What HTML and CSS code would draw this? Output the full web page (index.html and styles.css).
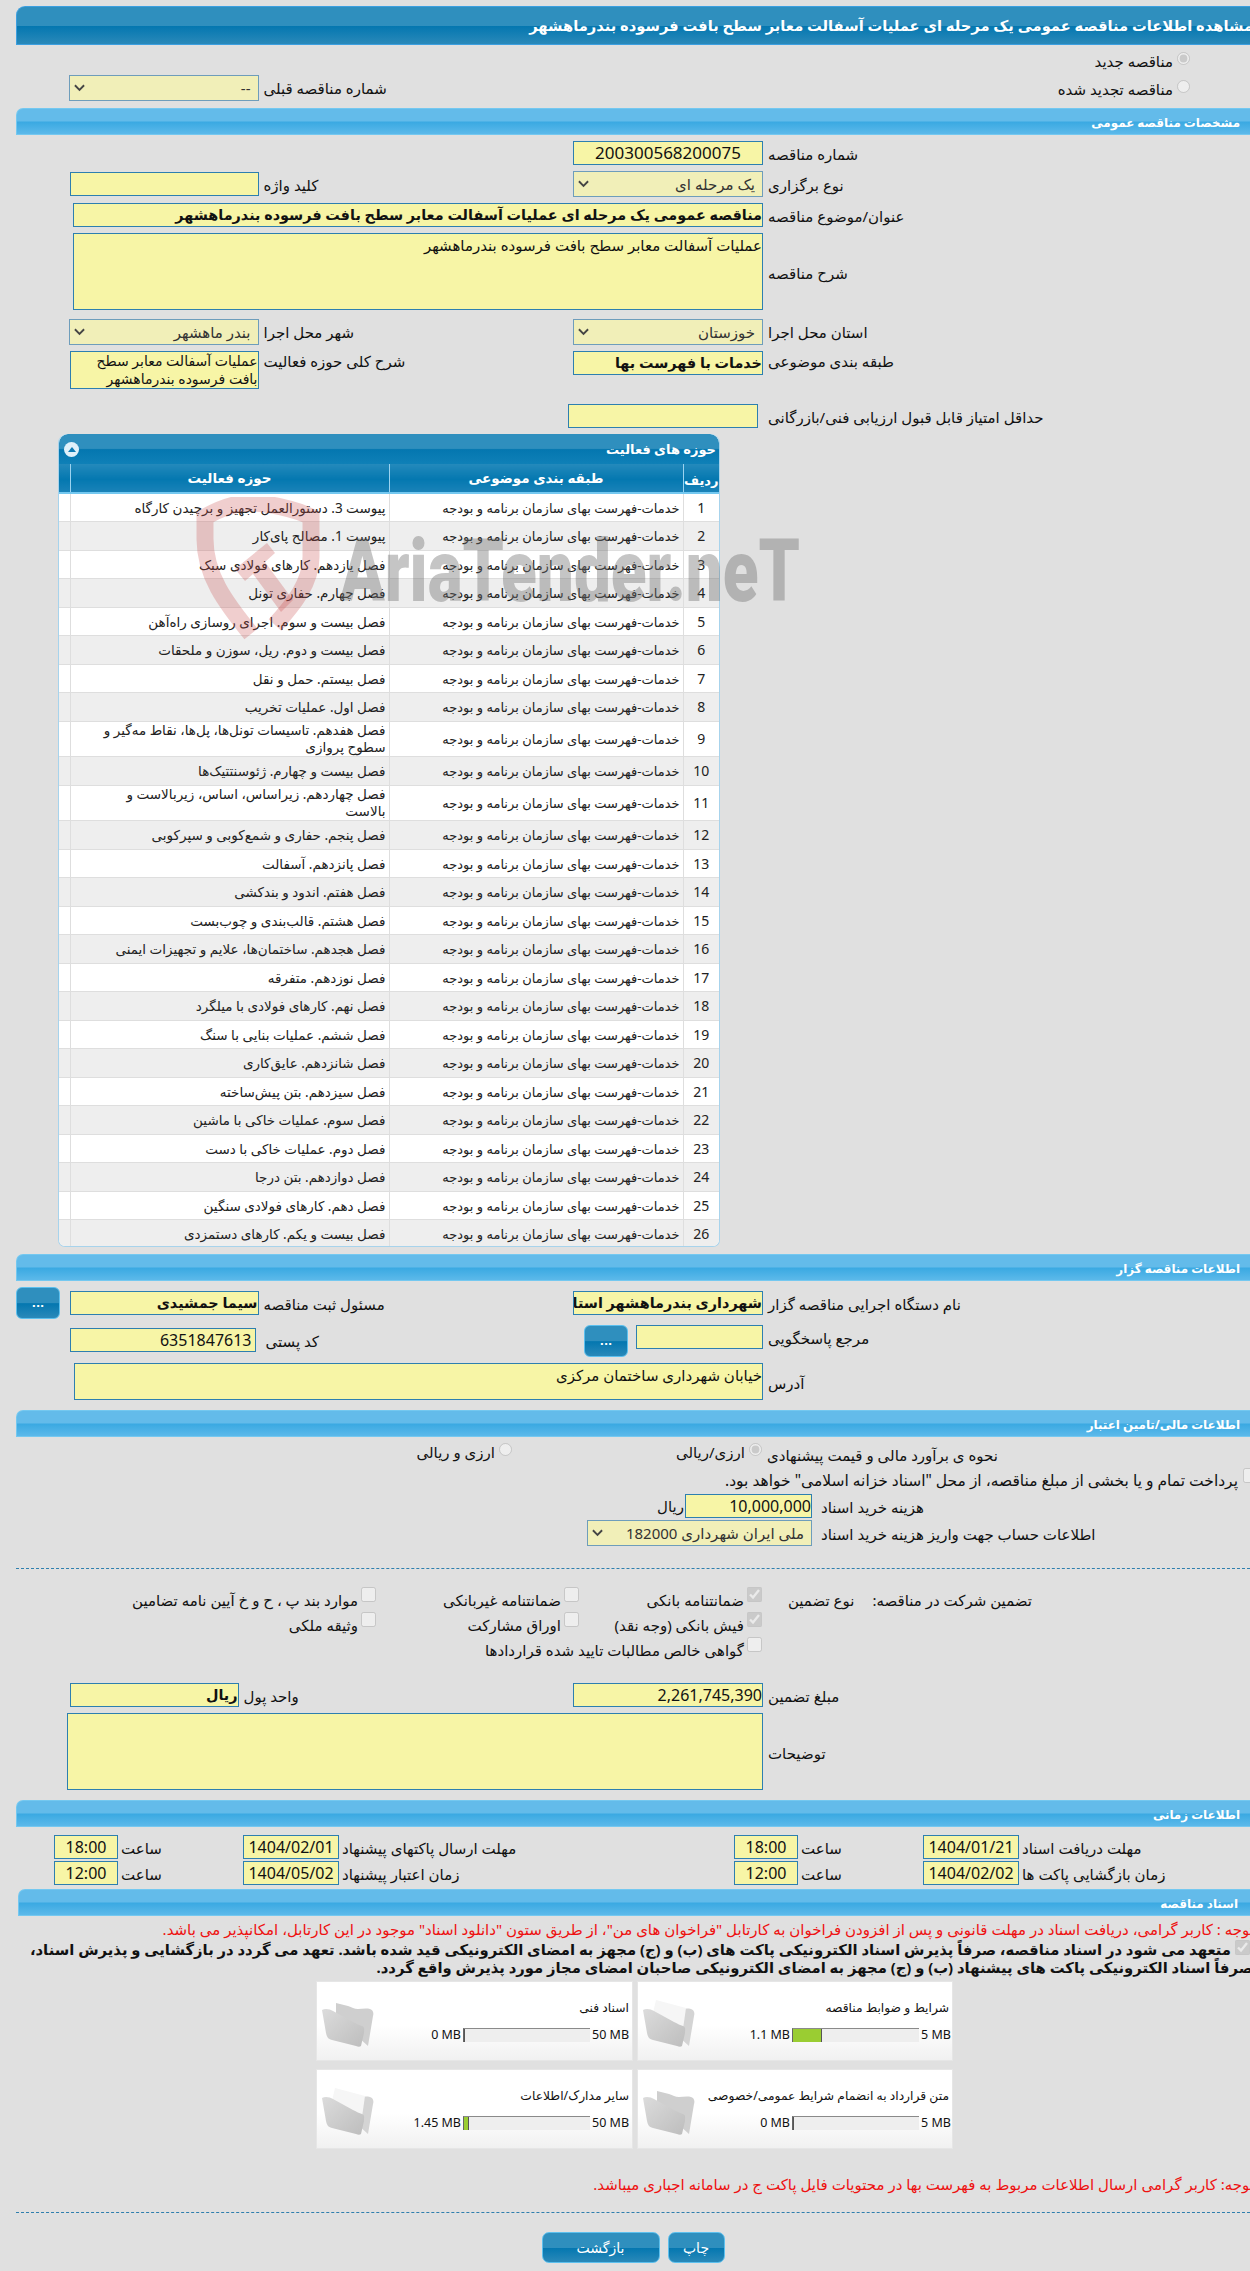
FILE: index.html
```html
<!DOCTYPE html>
<html lang="fa">
<head>
<meta charset="utf-8">
<title>مشاهده اطلاعات مناقصه</title>
<link rel="stylesheet" href="styles.css">
</head>
<body>
<div class="page">
  <h1 class="title"><span>مشاهده اطلاعات مناقصه عمومی یک مرحله ای عملیات آسفالت معابر سطح بافت فرسوده بندرماهشهر</span></h1>

  <div class="radio-row r-first"><label class="opt"><input type="radio" disabled checked><span>مناقصه جدید</span></label></div>
  <div class="row r-b">
    <div class="sel w190 c1"><span>--</span><svg class="chev" viewBox="0 0 12 8"><path d="M1 1l5 5 5-5" fill="none" stroke="#444" stroke-width="2"/></svg></div>
    <div class="l">شماره مناقصه قبلی</div>
    <label class="opt renew"><input type="radio" disabled><span>مناقصه تجدید شده</span></label>
  </div>

  <h2 class="sec m7">مشخصات مناقصه عمومی</h2>

  <div class="row m6">
    <div></div><div></div>
    <div class="inp w190 num big center">200300568200075</div>
    <div class="l">شماره مناقصه</div>
  </div>
  <div class="row m6 mid">
    <div class="inp w189 c1"></div>
    <div class="l">کلید واژه</div>
    <div class="sel w190 h27"><span>یک مرحله ای</span><svg class="chev" viewBox="0 0 12 8"><path d="M1 1l5 5 5-5" fill="none" stroke="#444" stroke-width="2"/></svg></div>
    <div class="l">نوع برگزاری</div>
  </div>
  <div class="row m6">
    <div class="inp wide690 strong span3">مناقصه عمومی یک مرحله ای عملیات آسفالت معابر سطح بافت فرسوده بندرماهشهر</div>
    <div class="l">عنوان/موضوع مناقصه</div>
  </div>
  <div class="row m6 mid">
    <div class="area wide690 h77 span3">عملیات آسفالت معابر سطح بافت فرسوده بندرماهشهر</div>
    <div class="l">شرح مناقصه</div>
  </div>
  <div class="row m9">
    <div class="sel w190 h27 c1"><span>بندر ماهشهر</span><svg class="chev" viewBox="0 0 12 8"><path d="M1 1l5 5 5-5" fill="none" stroke="#444" stroke-width="2"/></svg></div>
    <div class="l">شهر محل اجرا</div>
    <div class="sel w190 h27"><span>خوزستان</span><svg class="chev" viewBox="0 0 12 8"><path d="M1 1l5 5 5-5" fill="none" stroke="#444" stroke-width="2"/></svg></div>
    <div class="l">استان محل اجرا</div>
  </div>
  <div class="row m6">
    <div class="area w189 h38 c1 two">عملیات آسفالت معابر سطح بافت فرسوده بندرماهشهر</div>
    <div class="l lup">شرح کلی حوزه فعالیت</div>
    <div class="inp w190 strong">خدمات با فهرست بها</div>
    <div class="l lup">طبقه بندی موضوعی</div>
  </div>
  <div class="row m15">
    <div></div><div></div>
    <div class="inp w190 shift5"></div>
    <div class="l">حداقل امتیاز قابل قبول ارزیابی فنی/بازرگانی</div>
  </div>

  <section class="panel">
    <div class="panel-head">
      <span class="toggle"><svg viewBox="0 0 10 6"><path d="M5 0l5 6H0z" fill="#0f7bb3"/></svg></span>
      <span class="panel-title">حوزه های فعالیت</span>
    </div>
    <table class="grid" dir="rtl">
      <thead><tr><th class="cn">ردیف</th><th class="cc">طبقه بندی موضوعی</th><th class="ca">حوزه فعالیت</th><th class="cs"></th></tr></thead>
      <tbody>
        <tr><td class="cn">1</td><td>خدمات-فهرست بهای سازمان برنامه و بودجه</td><td>پیوست 3. دستورالعمل تجهیز و برچیدن کارگاه</td><td></td></tr>
        <tr><td class="cn">2</td><td>خدمات-فهرست بهای سازمان برنامه و بودجه</td><td>پیوست 1. مصالح پای‌کار</td><td></td></tr>
        <tr><td class="cn">3</td><td>خدمات-فهرست بهای سازمان برنامه و بودجه</td><td>فصل یازدهم. کارهای فولادی سبک</td><td></td></tr>
        <tr><td class="cn">4</td><td>خدمات-فهرست بهای سازمان برنامه و بودجه</td><td>فصل چهارم. حفاری تونل</td><td></td></tr>
        <tr><td class="cn">5</td><td>خدمات-فهرست بهای سازمان برنامه و بودجه</td><td>فصل بیست و سوم. اجرای روسازی راه‌آهن</td><td></td></tr>
        <tr><td class="cn">6</td><td>خدمات-فهرست بهای سازمان برنامه و بودجه</td><td>فصل بیست و دوم. ریل، سوزن و ملحقات</td><td></td></tr>
        <tr><td class="cn">7</td><td>خدمات-فهرست بهای سازمان برنامه و بودجه</td><td>فصل بیستم. حمل و نقل</td><td></td></tr>
        <tr><td class="cn">8</td><td>خدمات-فهرست بهای سازمان برنامه و بودجه</td><td>فصل اول. عملیات تخریب</td><td></td></tr>
        <tr class="tall"><td class="cn">9</td><td>خدمات-فهرست بهای سازمان برنامه و بودجه</td><td>فصل هفدهم. تاسیسات تونل‌ها، پل‌ها، نقاط مه‌گیر و سطوح پروازی</td><td></td></tr>
        <tr><td class="cn">10</td><td>خدمات-فهرست بهای سازمان برنامه و بودجه</td><td>فصل بیست و چهارم. ژئوسنتتیک‌ها</td><td></td></tr>
        <tr class="tall"><td class="cn">11</td><td>خدمات-فهرست بهای سازمان برنامه و بودجه</td><td>فصل چهاردهم. زیراساس، اساس، زیربالاست  و<br>بالاست</td><td></td></tr>
        <tr><td class="cn">12</td><td>خدمات-فهرست بهای سازمان برنامه و بودجه</td><td>فصل پنجم. حفاری و شمع‌کوبی و سپرکوبی</td><td></td></tr>
        <tr><td class="cn">13</td><td>خدمات-فهرست بهای سازمان برنامه و بودجه</td><td>فصل پانزدهم. آسفالت</td><td></td></tr>
        <tr><td class="cn">14</td><td>خدمات-فهرست بهای سازمان برنامه و بودجه</td><td>فصل هفتم. اندود و بندکشی</td><td></td></tr>
        <tr><td class="cn">15</td><td>خدمات-فهرست بهای سازمان برنامه و بودجه</td><td>فصل هشتم. قالب‌بندی و چوب‌بست</td><td></td></tr>
        <tr><td class="cn">16</td><td>خدمات-فهرست بهای سازمان برنامه و بودجه</td><td>فصل هجدهم. ساختمان‌ها، علایم و تجهیزات ایمنی</td><td></td></tr>
        <tr><td class="cn">17</td><td>خدمات-فهرست بهای سازمان برنامه و بودجه</td><td>فصل نوزدهم. متفرقه</td><td></td></tr>
        <tr><td class="cn">18</td><td>خدمات-فهرست بهای سازمان برنامه و بودجه</td><td>فصل نهم. کارهای فولادی با میلگرد</td><td></td></tr>
        <tr><td class="cn">19</td><td>خدمات-فهرست بهای سازمان برنامه و بودجه</td><td>فصل ششم. عملیات بنایی با سنگ</td><td></td></tr>
        <tr><td class="cn">20</td><td>خدمات-فهرست بهای سازمان برنامه و بودجه</td><td>فصل شانزدهم. عایق‌کاری</td><td></td></tr>
        <tr><td class="cn">21</td><td>خدمات-فهرست بهای سازمان برنامه و بودجه</td><td>فصل سیزدهم. بتن پیش‌ساخته</td><td></td></tr>
        <tr><td class="cn">22</td><td>خدمات-فهرست بهای سازمان برنامه و بودجه</td><td>فصل سوم. عملیات خاکی با ماشین</td><td></td></tr>
        <tr><td class="cn">23</td><td>خدمات-فهرست بهای سازمان برنامه و بودجه</td><td>فصل دوم. عملیات خاکی با دست</td><td></td></tr>
        <tr><td class="cn">24</td><td>خدمات-فهرست بهای سازمان برنامه و بودجه</td><td>فصل دوازدهم. بتن درجا</td><td></td></tr>
        <tr><td class="cn">25</td><td>خدمات-فهرست بهای سازمان برنامه و بودجه</td><td>فصل دهم. کارهای فولادی سنگین</td><td></td></tr>
        <tr><td class="cn">26</td><td>خدمات-فهرست بهای سازمان برنامه و بودجه</td><td>فصل بیست و یکم. کارهای دستمزدی</td><td></td></tr>
      </tbody>
    </table>
  </section>

  <h2 class="sec m7">اطلاعات مناقصه گزار</h2>

  <div class="row m6 h32 mid">
    <div class="with-btn c1"><button class="btn-dots" type="button">...</button><div class="inp w189 strong">سیما جمشیدی</div></div>
    <div class="l">مسئول ثبت مناقصه</div>
    <div class="inp w190 strong">شهرداری بندرماهشهر استان خوزستان</div>
    <div class="l">نام دستگاه اجرایی مناقصه گزار</div>
  </div>
  <div class="row m6 h32">
    <div class="inp w186 num c1 ind3 down3 rm3">6351847613</div>
    <div class="l lp7 down3">کد پستی</div>
    <div class="with-btn2"><button class="btn-dots" type="button">...</button><div class="inp w127"></div></div>
    <div class="l">مرجع پاسخگویی</div>
  </div>
  <div class="row m6 mid">
    <div class="area wide689 h37 span3">خیابان شهرداری ساختمان مرکزی</div>
    <div class="l">آدرس</div>
  </div>

  <h2 class="sec m10">اطلاعات مالی/تامین اعتبار</h2>

  <div class="cur-row">
    <label class="opt c-end"><input type="radio" disabled><span>ارزی و ریالی</span></label>
    <label class="opt c-end"><input type="radio" disabled checked><span>ارزی/ریالی</span></label>
    <div class="l nop">نحوه ی برآورد مالی و قیمت پیشنهادی</div>
  </div>
  <div class="treasury"><input type="checkbox" disabled><span>پرداخت تمام و یا بخشی از مبلغ مناقصه، از محل "اسناد خزانه اسلامی" خواهد بود.</span></div>
  <div class="row-b m5">
    <div class="cost"><span class="unit">ریال</span><div class="inp w127 num">10,000,000</div></div>
    <div class="l lp9">هزینه خرید اسناد</div>
  </div>
  <div class="row-b m2">
    <div class="sel w225 h27 endself"><span>ملی ایران شهرداری 182000</span><svg class="chev" viewBox="0 0 12 8"><path d="M1 1l5 5 5-5" fill="none" stroke="#444" stroke-width="2"/></svg></div>
    <div class="l lp9">اطلاعات حساب جهت واریز هزینه خرید اسناد</div>
  </div>

  <hr class="dots m22">

  <div class="g-row m18">
    <label class="ck"><input type="checkbox" disabled><span>موارد بند پ ، ح و خ آیین نامه تضامین</span></label>
    <label class="ck"><input type="checkbox" disabled><span>ضمانتنامه غیربانکی</span></label>
    <label class="ck"><input type="checkbox" disabled checked><span>ضمانتنامه بانکی</span></label>
    <div class="g-title"><span>نوع تضمین</span><span>تضمین شرکت در مناقصه:</span></div>
  </div>
  <div class="g-row m3">
    <label class="ck"><input type="checkbox" disabled><span>وثیقه ملکی</span></label>
    <label class="ck"><input type="checkbox" disabled><span>اوراق مشارکت</span></label>
    <label class="ck"><input type="checkbox" disabled checked><span>فیش بانکی (وجه نقد)</span></label>
  </div>
  <div class="g-row m3">
    <label class="ck ck-span"><input type="checkbox" disabled><span>گواهی خالص مطالبات تایید شده قراردادها</span></label>
  </div>

  <div class="row m24">
    <div class="inp w169 strong c1 rm20">ریال</div>
    <div class="l lshift">واحد پول</div>
    <div class="inp w190 num">2,261,745,390</div>
    <div class="l">مبلغ تضمین</div>
  </div>
  <div class="row m6 mid">
    <div class="area wide696 h77 span3"></div>
    <div class="l">توضیحات</div>
  </div>

  <h2 class="sec m10">اطلاعات زمانی</h2>

  <div class="dates m8">
    <div class="inp num center">18:00</div><div class="l lp3">ساعت</div>
    <div class="inp num center">1404/02/01</div><div class="l lp3">مهلت ارسال پاکتهای پیشنهاد</div>
    <div class="inp num center">18:00</div><div class="l lp3">ساعت</div>
    <div class="inp num center">1404/01/21</div><div class="l lp3">مهلت دریافت اسناد</div>
  </div>
  <div class="dates m2">
    <div class="inp num center">12:00</div><div class="l lp3">ساعت</div>
    <div class="inp num center">1404/05/02</div><div class="l lp3">زمان اعتبار پیشنهاد</div>
    <div class="inp num center">12:00</div><div class="l lp3">ساعت</div>
    <div class="inp num center">1404/02/02</div><div class="l lp3">زمان بازگشایی پاکت ها</div>
  </div>

  <h2 class="sec sec-docs m4">اسناد مناقصه</h2>

  <p class="red m3">توجه : کاربر گرامی، دریافت اسناد در مهلت قانونی و پس از افزودن فراخوان به کارتابل "فراخوان های من"، از طریق ستون "دانلود اسناد" موجود در این کارتابل، امکانپذیر می باشد.</p>
  <div class="pledge"><input type="checkbox" disabled checked><span>متعهد می شود در اسناد مناقصه، صرفاً پذیرش اسناد الکترونیکی پاکت های (ب) و (ج) مجهز به امضای الکترونیکی قید شده باشد. تعهد می گردد در بازگشایی و پذیرش اسناد،</span></div>
  <p class="pledge2">صرفاً اسناد الکترونیکی پاکت های پیشنهاد (ب) و (ج) مجهز به امضای الکترونیکی صاحبان امضای مجاز مورد پذیرش واقع گردد.</p>

  <div class="cards">
    <article class="card">
      <svg class="folder" viewBox="0 0 56 50"><use href="#f-empty"/></svg>
      <div class="card-body"><div class="card-title">اسناد فنی</div>
        <div class="meter"><span>0 MB</span><div class="bar"><i class="fill" style="width:0"></i></div><span class="max50">50 MB</span></div></div>
    </article>
    <article class="card">
      <svg class="folder" viewBox="0 0 56 50"><use href="#f-full"/></svg>
      <div class="card-body"><div class="card-title">شرایط و ضوابط مناقصه</div>
        <div class="meter"><span>1.1 MB</span><div class="bar"><i class="fill" style="width:23%"></i></div><span class="max5">5 MB</span></div></div>
    </article>
    <article class="card">
      <svg class="folder" viewBox="0 0 56 50"><use href="#f-full"/></svg>
      <div class="card-body"><div class="card-title">سایر مدارک/اطلاعات</div>
        <div class="meter"><span>1.45 MB</span><div class="bar"><i class="fill" style="width:4%"></i></div><span class="max50">50 MB</span></div></div>
    </article>
    <article class="card">
      <svg class="folder" viewBox="0 0 56 50"><use href="#f-empty"/></svg>
      <div class="card-body"><div class="card-title">متن قرارداد به انضمام شرایط عمومی/خصوصی</div>
        <div class="meter"><span>0 MB</span><div class="bar"><i class="fill" style="width:0"></i></div><span class="max5">5 MB</span></div></div>
    </article>
  </div>

  <p class="red note">توجه: کاربر گرامی ارسال اطلاعات مربوط به فهرست بها در محتویات فایل پاکت ج در سامانه اجباری میباشد.</p>
  <hr class="dots m18">
  <div class="actions">
    <button class="btn b-back" type="button">بازگشت</button>
    <button class="btn b-print" type="button">چاپ</button>
  </div>

  <svg class="watermark" viewBox="0 0 610 145" aria-hidden="true">
    <path d="M56 137C30 105 10 78 10 42V20C24 12 38 6 55 6s46 6 61 14v40c0 26-18 48-36 68" fill="none" stroke="#c9504f" stroke-opacity=".28" stroke-width="17"/>
    <path d="M40 72L72 46l8 10-10 9 28 38-12 12-28-38-8 7z" fill="#c9504f" fill-opacity=".28"/>
    <text x="145" y="104" class="wm-text" textLength="460" lengthAdjust="spacingAndGlyphs">AriaTender.neT</text>
  </svg>

  <svg class="defs" aria-hidden="true">
    <defs>
      <linearGradient id="fg" x1="0" y1="0" x2="1" y2="1"><stop offset="0" stop-color="#dcdcdc"/><stop offset="1" stop-color="#bdbdbd"/></linearGradient>
      <symbol id="f-empty" viewBox="0 0 56 50">
        <path d="M16 6l12 3c4 1 6 3 10 3 4 0 8-1 12 0 3 1 4 4 3 7l-5 30L16 20z" fill="#cfcfcf"/>
        <path d="M2 13c3-2 8-1 11 1l20 11c4 2 6 3 9 4 3 1 2 4 2 7l-3 13c-1 1-3 1-5 0L12 43C8 42 7 40 6 36z" fill="url(#fg)"/>
      </symbol>
      <symbol id="f-full" viewBox="0 0 56 50">
        <path d="M16 6l12 3c4 1 6 3 10 3 4 0 8-1 12 0 3 1 4 4 3 7l-5 30L16 20z" fill="#d4d4d4"/>
        <path d="M15 3l30 8-4 28L12 16z" fill="#f6f6f6"/>
        <path d="M2 13c3-2 8-1 11 1l20 11c4 2 6 3 9 4 3 1 2 4 2 7l-3 13c-1 1-3 1-5 0L12 43C8 42 7 40 6 36z" fill="url(#fg)"/>
      </symbol>
    </defs>
  </svg>
</div>
</body>
</html>
```
FILE: styles.css
```css
* { box-sizing: border-box; }
html, body { margin: 0; padding: 0; width: 1250px; height: 2271px; overflow: hidden; background: #e0e0e0; }
body { font-family: "Noto Sans", "DejaVu Sans", sans-serif; font-size: 13px; color: #111; }
.page { position: relative; width: 1250px; height: 2271px; padding: 6px 0 0 16px; overflow: hidden; }

.title { margin: 0; height: 39px; direction: rtl; white-space: nowrap; overflow: hidden; color: #fff; font-size: 14.7px; font-weight: bold; line-height: 37px;
  border: 1px solid #3c9fe0; border-right: 0; border-radius: 9px 0 0 0; padding-right: 0;
  background: linear-gradient(#2f8fbe 0, #2f8fbe 50%, #0477b0 52%, #2a89b9 100%); }
.title span { display: inline-block; margin-right: -3px; }

.sec { margin: 0; height: 27px; direction: rtl; padding-right: 10px; color: #fff; font-size: 11.9px; font-weight: bold; line-height: 26px;
  border: 1px solid #74c8f0; border-right: 0; border-radius: 7px 0 0 0;
  background: linear-gradient(#63bbea 0, #63bbea 48%, #3aa9e2 52%, #5cb9ea 100%); }
.sec-docs { margin-left: 2px; padding-right: 12px; }

.m2 { margin-top: 2px; } .m3 { margin-top: 3px; } .m4 { margin-top: 4px; } .m5 { margin-top: 5px; }
.m6 { margin-top: 6px; } .m7 { margin-top: 7px; } .m8 { margin-top: 8px; } .m9 { margin-top: 9px; }
.m10 { margin-top: 10px; } .m15 { margin-top: 15px; } .m18 { margin-top: 18px; }
.m22 { margin-top: 22px; } .m24 { margin-top: 24px; }

.row { display: grid; grid-template-columns: 242.5px 314.5px 190px 1fr; align-items: start; }
.row.mid { align-items: center; }
.h32 { min-height: 32px; }
.c1 { justify-self: end; }
.span3 { grid-column: 1 / 4; justify-self: end; }
.l { direction: rtl; text-align: left; height: 24px; padding: 1px 0 0 5px; font-size: 15px; line-height: 24px; white-space: nowrap; }
.nop { padding-top: 0; }
.lup { margin-top: -3px; }
.lp3 { padding-left: 3px; } .lp9 { padding-left: 9px; } .lp7 { padding-left: 7px; }
.lshift { margin-left: -20px; }
.down3 { margin-top: 3px; }
.rm3 { margin-right: 3px; } .rm20 { margin-right: 20px; }

.inp, .area { direction: rtl; background: #f7f5a6; border: 1px solid #2d7fb0; font-size: 15px; white-space: nowrap; overflow: hidden; }
.inp { height: 24px; line-height: 22px; }
.area { white-space: normal; line-height: 22px; }
.strong { font-size: 14.4px; font-weight: bold; }
.num { font-size: 16px; direction: ltr; text-align: right; }
.big { font-size: 17px; }
.center { text-align: center; }
.ind3 { padding-right: 3px; }
.shift5 { margin-left: -5px; }
.two { font-size: 14px; line-height: 18px; padding-left: 10px; }
.w127 { width: 127px; } .w169 { width: 169px; } .w186 { width: 186px; } .w189 { width: 189px; } .w190 { width: 190px; } .w225 { width: 225px; }
.wide690 { width: 690px; } .wide689 { width: 689px; } .wide696 { width: 696px; }
.h27 { height: 27px; } .h37 { height: 37px; } .h38 { height: 38px; } .h77 { height: 77px; }

.sel { direction: rtl; display: flex; align-items: center; justify-content: space-between; height: 26px; padding: 0 7px 0 4px; background: #f1efb8; border: 1px solid #6e9dbb; color: #333; font-size: 15px; white-space: nowrap; overflow: hidden; }
.chev { width: 11px; height: 8px; flex: none; }
.endself { justify-self: end; }

.radio-row { display: flex; justify-content: flex-end; height: 26px; padding: 3px 60px 0 0; }
.r-first { margin-top: 4px; }
.r-b { height: 26px; grid-template-columns: 242.5px 1fr auto; }
.opt { direction: rtl; display: flex; align-items: flex-start; gap: 4px; font-size: 15px; line-height: 20px; white-space: nowrap; }
.opt input { margin: 0; width: 13px; height: 13px; flex: none; }
.opt span { margin-top: -1px; }
.renew { margin-right: 60px; padding-top: 5px; }

.panel { position: relative; margin: 6px 0 0 42px; width: 662px; height: 813px; background: #fff; border: 1px solid #a7d3ec; border-top: 0; border-radius: 9px 9px 7px 7px; overflow: hidden; }
.panel-head { display: flex; align-items: center; justify-content: space-between; height: 30px; padding: 0 3px 0 5px; border-radius: 9px 9px 0 0;
  background: linear-gradient(#2f8fbe 0, #2f8fbe 48%, #0477b0 52%, #0f80b7 100%); }
.panel-title { direction: rtl; color: #fff; font-size: 13px; font-weight: bold; }
.toggle { display: flex; align-items: center; justify-content: center; width: 15px; height: 15px; border-radius: 50%; background: #dff0fa; }
.toggle svg { width: 8px; height: 5px; }
.grid { width: 660px; border-collapse: collapse; table-layout: fixed; }
.grid th { height: 29px; padding: 0; color: #fff; font-size: 13.5px; font-weight: bold; border-left: 1px solid #9bd3f0; border-bottom: 2px solid #74c8f0; background: linear-gradient(#2489bb 0, #0478b0 55%, #1a82b8 100%); }
.grid th.cn { font-size: 13px; padding-top: 3px; }
.grid th.cs { border-left: 0; }
.cn { width: 36px; } .cc { width: 294px; } .ca { width: 319px; } .cs { width: 11px; }
.grid td { height: 28px; padding: 2px 3px 0; font-size: 13px; line-height: 17px; color: #222; border-left: 1px solid #dedede; border-bottom: 1px solid #dedede; text-align: right; }
.grid td:nth-child(3) { font-size: 13.5px; }
.grid tbody tr:nth-child(even) td { height: 29px; background: #eeeeee; }
.grid tr.tall td { height: 34px; padding-top: 0; }
.grid tr.tall td:nth-child(2) { padding-top: 2px; }
.grid tbody td:last-child { border-left: 0; padding: 0; }
.grid tbody td.cn { text-align: center; font-family: "Noto Sans", sans-serif; font-size: 14px; padding: 0; }

.with-btn { display: flex; justify-content: space-between; align-items: center; width: 242.5px; }
.with-btn2 { display: flex; justify-content: space-between; align-items: flex-start; width: 179px; justify-self: end; }
.btn-dots { width: 44px; height: 32px; padding: 0; color: #fff; font: bold 11px "DejaVu Sans", sans-serif; border: 1px solid #5cc0ee; border-radius: 6px; background: linear-gradient(#2f8fbe 0, #2f8fbe 50%, #0477b0 52%, #2a89b9 100%); }

.cur-row { display: grid; grid-template-columns: 496px 250px 1fr; height: 23px; margin-top: 6px; }
.c-end { justify-self: end; }
.treasury { direction: rtl; display: flex; gap: 5px; height: 21px; margin-top: 2px; margin-right: -8px; font-size: 15.5px; line-height: 24px; white-space: nowrap; }
.treasury input { margin: 0; width: 15px; height: 15px; flex: none; }
.row-b { display: grid; grid-template-columns: 796px 1fr; align-items: center; }
.cost { display: flex; justify-content: flex-end; }
.unit { direction: rtl; font-size: 15px; line-height: 24px; padding-right: 1px; }

.dots { border: 0; border-top: 1px dashed #2f7fae; height: 0; margin-bottom: 0; margin-left: 0; margin-right: 0; }

.g-row { display: grid; grid-template-columns: 360px 203px 183px 1fr; height: 22px; }
.ck { justify-self: end; direction: rtl; display: flex; gap: 3px; font-size: 15px; line-height: 22px; white-space: nowrap; }
.ck input { margin: 0; width: 15px; height: 15px; flex: none; }
.ck span { padding-top: 2px; }
.ck-span { grid-column: 2 / 4; }
.g-title { direction: rtl; display: flex; flex-direction: row-reverse; justify-content: flex-end; gap: 18px; padding: 3px 0 0 26px; width: 270px; font-size: 15px; white-space: nowrap; }

.dates { display: grid; grid-template-columns: 64px 125px 96px 395px 64px 125px 96px 1fr; padding-left: 38px; }

.red { margin-bottom: 0; margin-right: -4px; margin-left: 0; direction: rtl; color: #ee1111; font-size: 15px; line-height: 20px; white-space: nowrap; }
.note { margin-top: 25px; }
.pledge { direction: rtl; display: flex; gap: 4px; margin-top: 1px; height: 18px; font-size: 14.8px; font-weight: bold; line-height: 18px; white-space: nowrap; }
.pledge input { margin: 0; width: 15px; height: 15px; flex: none; }
.pledge2 { margin: 0 -3px 0 0; direction: rtl; font-size: 14.8px; font-weight: bold; line-height: 18px; white-space: nowrap; }

.cards { display: grid; grid-template-columns: 317px 316px; column-gap: 4px; row-gap: 8px; margin: 5px 0 0 300px; }
.card { display: flex; height: 80px; padding: 0 3px; background: linear-gradient(#fff 0, #fff 55%, #f1f1f1 100%); border: 1px solid #e6e6e6; }
.folder { flex: none; width: 56px; height: 50px; margin-top: 15px; }
.card-body { flex: 1; display: flex; flex-direction: column; align-items: flex-end; }
.card-title { direction: rtl; margin-top: 17px; font-size: 12.3px; line-height: 18px; white-space: nowrap; }
.meter { display: flex; align-items: center; gap: 2px; margin-top: 9px; font-size: 12.5px; white-space: nowrap; }
.bar { width: 127px; height: 14px; background: #eeeeee; border-top: 1px solid #8a8a8a; border-left: 1px solid #666; }
.fill { display: block; height: 100%; background: #9acd32; border-right: 1px solid #555; }
.max5 { width: 28px; text-align: right; }
.max50 { width: 37px; text-align: right; }

.actions { display: flex; justify-content: center; gap: 8px; margin-top: 19px; }
.btn { height: 31px; color: #fff; font: 14px "DejaVu Sans", sans-serif; border: 1px solid #5cc0ee; border-radius: 7px; background: linear-gradient(#2f8fbe 0, #2f8fbe 50%, #0477b0 52%, #2a89b9 100%); }
.b-back { width: 118px; } .b-print { width: 57px; }

.watermark { position: absolute; left: 195px; top: 497px; width: 610px; height: 145px; pointer-events: none; }
.wm-text { font-family: "Roboto", "Noto Sans", sans-serif; font-weight: 900; font-size: 88px; fill: #6f6f6f; fill-opacity: .4; }
.defs { position: absolute; width: 0; height: 0; }
```
